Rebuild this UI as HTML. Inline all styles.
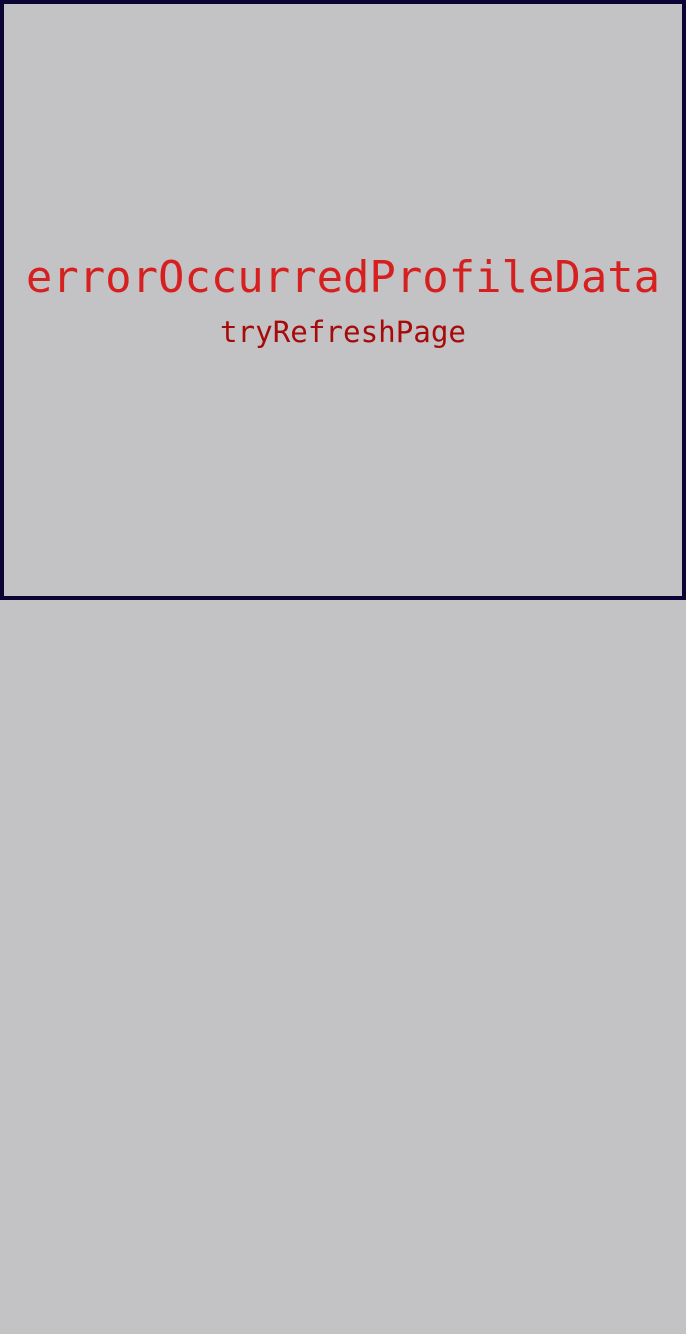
<!DOCTYPE html>
<html><head><style>
html,body{margin:0;padding:0;background:#c3c2c4;width:686px;height:1334px;overflow:hidden}
.box{position:absolute;left:0;top:0;width:678px;height:592px;border:4px solid #0b0536;}
.t1{position:absolute;left:0;width:686px;top:248px;text-align:center;font-family:"DejaVu Sans Mono",monospace;font-size:43.9px;line-height:60px;color:#d61f1f;white-space:nowrap}
.t2{position:absolute;left:0;width:686px;top:313px;text-align:center;font-family:"DejaVu Sans Mono",monospace;font-size:29.2px;line-height:38px;color:#a60a0a;white-space:nowrap}
</style></head><body>
<div class="box"></div>
<div class="t1">errorOccurredProfileData</div>
<div class="t2">tryRefreshPage</div>
</body></html>
